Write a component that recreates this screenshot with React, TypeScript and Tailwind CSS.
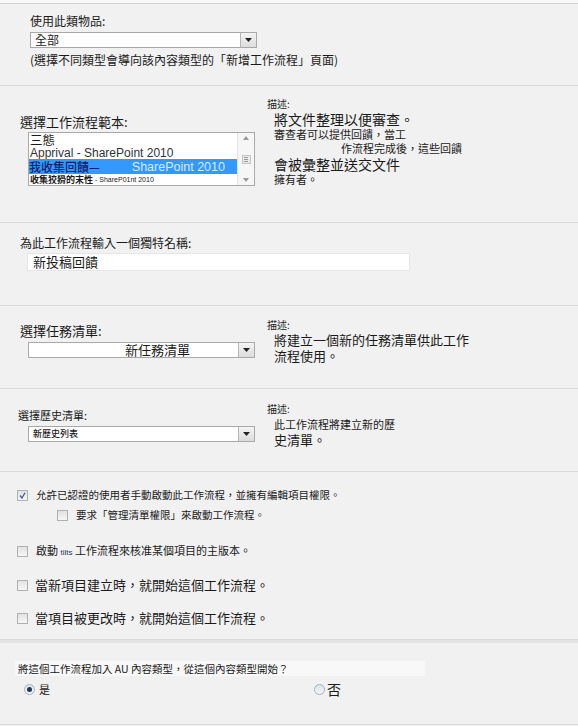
import React from "react";

const FONT = { fontFamily: '"Noto Sans CJK TC", "Noto Sans", "Liberation Sans", sans-serif' };
const LATIN = { fontFamily: '"Liberation Sans", "Noto Sans CJK TC", sans-serif' };

function Arrow() {
  return (
    <div className="flex h-full w-[16px] shrink-0 items-center justify-center border-l border-[#b5b5b5] bg-gradient-to-b from-[#f4f4f4] to-[#dcdcdc]">
      <svg width="7" height="4" viewBox="0 0 7 4">
        <path d="M0 0 L7 0 L3.5 4 Z" fill="#222" />
      </svg>
    </div>
  );
}

function Select({ children, className = "" }: { children: React.ReactNode; className?: string }) {
  return (
    <div className="flex h-[16px] w-[227px] items-stretch border border-[#a9a9a9] bg-white">
      <div className={`flex flex-1 items-center whitespace-nowrap px-[4px] leading-[14px] ${className}`}>
        {children}
      </div>
      <Arrow />
    </div>
  );
}

function Checkbox({ checked = false }: { checked?: boolean }) {
  return (
    <span className="flex h-[11px] w-[11px] shrink-0 items-center justify-center border border-[#b0b0b0] bg-gradient-to-b from-[#e2e2e2] to-[#f6f6f6]">
      {checked && (
        <svg width="7" height="7" viewBox="0 0 7 7">
          <path d="M1 3.5 L3 6 L6 0.8" stroke="#4a5a8a" strokeWidth="1.3" fill="none" />
        </svg>
      )}
    </span>
  );
}

function Radio({ checked = false }: { checked?: boolean }) {
  return (
    <span className="flex h-[11px] w-[11px] shrink-0 items-center justify-center rounded-full border border-[#a8b0bd] bg-gradient-to-b from-[#dde3ea] to-[#f5f7f9]">
      {checked && <span className="h-[5px] w-[5px] rounded-full bg-[#25365a]" />}
    </span>
  );
}

function Section({ h, children, className = "" }: { h: string; children: React.ReactNode; className?: string }) {
  return <div className={`border-b border-[#dadada] ${h} ${className}`}>{children}</div>;
}

export default function App() {
  return (
    <div className="h-[726px] w-[578px] overflow-hidden bg-[#f1f1f1] text-[#1a1a1a]" style={FONT}>
      <div className="h-[4px] border-b border-[#d2d2d2] bg-[#f8f8f8]" />

      {/* content type */}
      <Section h="h-[82px]" className="pl-[30px] pt-[9px]">
        <div className="text-[12px] leading-[15px]">使用此類物品:</div>
        <div className="mt-[4px]">
          <Select className="text-[12px]">全部</Select>
        </div>
        <div className="mt-[4px] text-[12px] leading-[15px]">(選擇不同類型會導向該內容類型的「新增工作流程」頁面)</div>
      </Section>

      {/* template */}
      <Section h="h-[137px]" className="flex">
        <div className="w-[267px] shrink-0 pl-[20px] pt-[28px]">
          <div className="text-[13px] leading-[16px]">選擇工作流程範本:</div>
          <div className="ml-[8px] mt-[2px] flex h-[54px] w-[227px] border border-[#a9a9a9] bg-white">
            <div className="flex flex-1 flex-col whitespace-nowrap">
              <div className="flex h-[13px] items-center pl-[1px] text-[12.5px] leading-[14px]">三態</div>
              <div className="flex h-[13px] items-center pl-[1px] pt-[1px] text-[12px] leading-[14px] text-[#333]" style={LATIN}>
                Apprival - SharePoint 2010
              </div>
              <div className="flex h-[15px] items-center bg-[#3399ff] text-[12px] leading-[14px] text-[#10206a]">
                <span className="font-medium">我收集回饋—</span>
                <span className="ml-[32px] text-[12.5px] text-[#d8ecff]" style={LATIN}>
                  SharePoint 2010
                </span>
              </div>
              <div className="flex h-[11px] items-center pl-[1px] text-[9px] font-bold leading-[11px]">
                收集狡猾的末性
                <span className="ml-[2px] text-[7px] font-normal" style={LATIN}>
                  - ShareP01nt 2010
                </span>
              </div>
            </div>
            <div className="flex w-[17px] flex-col items-center justify-between border-l border-[#e4e4e4] bg-[#f6f6f6] py-[3px]">
              <svg width="6" height="4" viewBox="0 0 6 4">
                <path d="M0 4 L6 4 L3 0 Z" fill="#999" />
              </svg>
              <div className="flex h-[9px] w-[9px] flex-col items-center justify-center gap-[1px] border border-[#c5c5c5] bg-[#eaeaea]">
                <span className="h-px w-[4px] bg-[#999]" />
                <span className="h-px w-[4px] bg-[#999]" />
                <span className="h-px w-[4px] bg-[#999]" />
              </div>
              <svg width="6" height="4" viewBox="0 0 6 4">
                <path d="M0 0 L6 0 L3 4 Z" fill="#999" />
              </svg>
            </div>
          </div>
        </div>
        <div className="pt-[11px]">
          <div className="text-[10px] leading-[14px]">描述:</div>
          <div className="pl-[7px]">
            <div className="text-[14px] leading-[16px]">將文件整理以便審查。</div>
            <div className="text-[11px] leading-[14px]">審查者可以提供回饋，當工</div>
            <div className="pl-[67px] text-[11px] leading-[15px]">作流程完成後，這些回饋</div>
            <div className="text-[14px] leading-[16px]">會被彙整並送交文件</div>
            <div className="text-[11px] leading-[14px]">擁有者。</div>
          </div>
        </div>
      </Section>

      {/* name */}
      <Section h="h-[83px]" className="pl-[20px] pt-[12px]">
        <div className="text-[12px] leading-[15px]">為此工作流程輸入一個獨特名稱:</div>
        <div className="ml-[7px] mt-[3px] flex h-[18px] w-[383px] items-center border border-[#e6e6e6] bg-white pl-[5px] text-[13px]">
          新投稿回饋
        </div>
      </Section>

      {/* task list */}
      <Section h="h-[83px]" className="flex">
        <div className="w-[267px] shrink-0 pl-[20px] pt-[17px]">
          <div className="text-[13px] leading-[16px]">選擇任務清單:</div>
          <div className="ml-[8px] mt-[3px]">
            <Select className="pl-[96px] text-[13px]">新任務清單</Select>
          </div>
        </div>
        <div className="pt-[12px]">
          <div className="text-[10px] leading-[14px]">描述:</div>
          <div className="pl-[7px] text-[13px] leading-[16px]">
            <div>將建立一個新的任務清單供此工作</div>
            <div>流程使用。</div>
          </div>
        </div>
      </Section>

      {/* history list */}
      <Section h="h-[83px]" className="flex">
        <div className="w-[267px] shrink-0 pl-[18px] pt-[19px]">
          <div className="text-[11px] leading-[14px]">選擇歷史清單:</div>
          <div className="ml-[10px] mt-[4px]">
            <Select className="text-[9px] font-medium">新歷史列表</Select>
          </div>
        </div>
        <div className="pt-[13px]">
          <div className="text-[10px] leading-[14px]">描述:</div>
          <div className="pl-[7px]">
            <div className="text-[11px] leading-[16px]">此工作流程將建立新的歷</div>
            <div className="text-[13px] leading-[16px]">史清單。</div>
          </div>
        </div>
      </Section>

      {/* start options */}
      <Section h="h-[168px]" className="pl-[17px] pt-[16px]">
        <div className="flex items-center gap-[8px] text-[10.5px] leading-[14px]">
          <Checkbox checked />
          <span>允許已認證的使用者手動啟動此工作流程，並擁有編輯項目權限。</span>
        </div>
        <div className="ml-[40px] mt-[6px] flex items-center gap-[8px] text-[10.5px] leading-[14px]">
          <Checkbox />
          <span>要求「管理清單權限」來啟動工作流程。</span>
        </div>
        <div className="mt-[21px] flex items-center gap-[8px] text-[11px] leading-[14px]">
          <Checkbox />
          <span>
            啟動 <span className="text-[8px] text-[#2a3a5a]" style={LATIN}>tilts</span> 工作流程來核准某個項目的主版本。
          </span>
        </div>
        <div className="mt-[17px] flex items-center gap-[7px] text-[13px] leading-[16px]">
          <Checkbox />
          <span>當新項目建立時，就開始這個工作流程。</span>
        </div>
        <div className="mt-[17px] flex items-center gap-[7px] text-[13px] leading-[16px]">
          <Checkbox />
          <span>當項目被更改時，就開始這個工作流程。</span>
        </div>
      </Section>

      {/* add to content types */}
      <div className="h-[3px] bg-[#e4e4e4]" />
      <div className="h-[82px] border-b border-[#dadada] pl-[15px] pt-[18px]">
        <div className="flex h-[15px] w-[410px] items-center bg-[#f8f8f8] pl-[3px] text-[10.5px] leading-[14px]">
          將這個工作流程加入 AU 內容類型，從這個內容類型開始？
        </div>
        <div className="mt-[3px] flex items-center">
          <div className="ml-[9px] flex w-[290px] items-center gap-[4px] text-[11px]">
            <Radio checked />
            <span>是</span>
          </div>
          <div className="flex items-center gap-[2px] text-[14px]">
            <Radio />
            <span>否</span>
          </div>
        </div>
      </div>
    </div>
  );
}
